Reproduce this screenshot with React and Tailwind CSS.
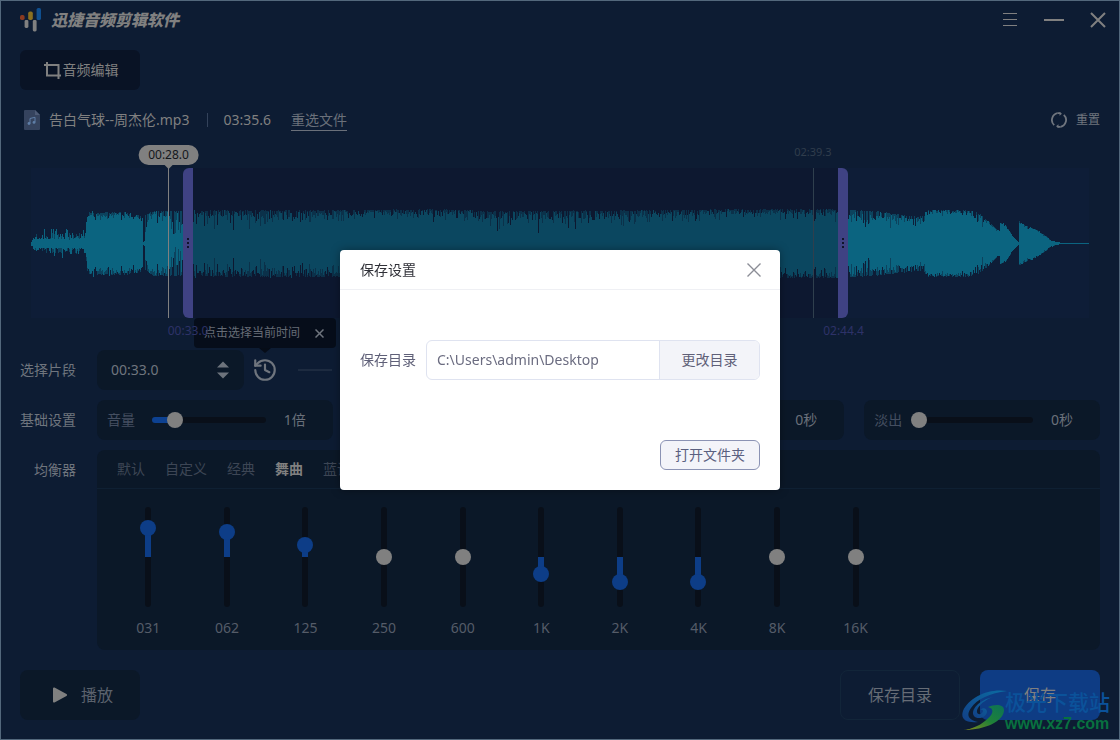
import { useState } from 'react';
import { History } from 'lucide-react';

const PRESETS = ['默认', '自定义', '经典', '舞曲', '蓝调'];

const BANDS = [
    { label: '031', gain: 8.3 },
    { label: '062', gain: 7.1 },
    { label: '125', gain: 3.4 },
    { label: '250', gain: 0 },
    { label: '600', gain: 0 },
    { label: '1K', gain: -4.9 },
    { label: '2K', gain: -7.1 },
    { label: '4K', gain: -7.1 },
    { label: '8K', gain: 0 },
    { label: '16K', gain: 0 },
];

// --- WAVE FORM ---
const WAVE_WIDTH = 1058;
const WAVE_MIDDLE = 75;

// [x, loudness, how deep the dips go, how high the peaks go]
const ENVELOPE = [
    [0, 1, 0, 1],
    [3, 4, 1, 10],
    [54, 5, 1, 12],
    [56, 24, 5, 8],
    [58, 29, 5, 4],
    [90, 30, 6, 3],
    [110, 26, 6, 6],
    [111, 26, 6, 6],
    [112, 1, 0, 0],
    [113, 2, 0, 0],
    [114, 26, 12, 7],
    [124, 31, 8, 3],
    [143, 31, 24, 3],
    [149, 31, 22, 3],
    [155, 31, 10, 3],
    [200, 32, 14, 2],
    [300, 32, 10, 2],
    [410, 33, 8, 2],
    [450, 31, 14, 3],
    [520, 31, 16, 3],
    [620, 32, 11, 2],
    [720, 33, 7, 2],
    [815, 33, 10, 2],
    [855, 30, 13, 2],
    [865, 28, 14, 3],
    [892, 25, 9, 4],
    [895, 32, 4, 3],
    [936, 32, 5, 2],
    [949, 28, 14, 3],
    [955, 23, 6, 2],
    [966, 13, 2, 1],
    [968, 12, 1, 1],
    [969, 20, 1, 1],
    [974, 18, 1, 1],
    [982, 6, 1, 1],
    [986, 2, 0, 1],
    [987, 1, 0, 0],
    [988, 20, 1, 6],
    [994, 17, 2, 2],
    [1005, 13, 1, 2],
    [1014, 7, 1, 1],
    [1020, 2, 0, 1],
    [1030, 0, 0, 0],
    [1058, 0, 0, 0],
];

function envelopeAt(x) {
    let i = 0;
    while (i < ENVELOPE.length - 2 && ENVELOPE[i + 1][0] <= x) i++;
    const a = ENVELOPE[i];
    const b = ENVELOPE[i + 1];
    const t = (x - a[0]) / (b[0] - a[0]);
    return [1, 2, 3].map((k) => a[k] + (b[k] - a[k]) * t);
}

function buildWave() {
    let seed = 28;
    const random = () => {
        seed = (seed * 16807) % 2147483647;
        return seed / 2147483647;
    };
    let body = '';
    let peaks = '';
    for (let x = 0; x < WAVE_WIDTH; x++) {
        const [level, dip, peak] = envelopeAt(x);
        const shape = random() ** 4;
        const side = () => Math.max(0, Math.round(level - shape * dip - random() * dip * 0.5 + random() ** 4 * peak));
        const up = side();
        const down = side();
        body += `M${x} ${WAVE_MIDDLE - up}V${WAVE_MIDDLE + 1 + down}`;
        if (random() < 0.6) {
            const reach = (h) => Math.round(Math.max(h, level + random() * peak * 0.5));
            peaks += `M${x} ${WAVE_MIDDLE - reach(up)}V${WAVE_MIDDLE + 1 + reach(down)}`;
        }
    }
    return { body, peaks };
}

const WAVE = buildWave();

function Waveform() {
    return (
        <div className="relative mx-[11px] h-[150px] bg-[#0e1d37]">
            <svg viewBox="0 0 1058 150" preserveAspectRatio="none" className="block h-full w-full" shapeRendering="crispEdges">
                <g transform="translate(0.5 0)" fill="none" strokeWidth="1">
                    <path d={WAVE.peaks} stroke="#0c435e" />
                    <path d={WAVE.body} stroke="#0b6480" />
                </g>
            </svg>

            {/* SELECTED RANGE */}
            <div className="absolute inset-y-0 left-[15.3%] right-[23.7%] bg-[#0b1226]/35"></div>
            <div className="absolute inset-y-0 left-[14.4%] flex w-2.5 flex-col items-center justify-center gap-0.5 rounded-l-md bg-[#3f4283]">
                <HandleDots />
            </div>
            <div className="absolute inset-y-0 left-[76.3%] flex w-2.5 flex-col items-center justify-center gap-0.5 rounded-r-md bg-[#3f4283]">
                <HandleDots />
            </div>
            <span className="absolute left-[14.85%] top-[155px] z-10 -translate-x-1/2 text-xs leading-4 text-[#2d3268]">00:33.0</span>
            <span className="absolute left-[76.8%] top-[155px] -translate-x-1/2 text-xs leading-4 text-[#2d3268]">02:44.4</span>

            {/* PLAYHEADS */}
            <div className="absolute inset-y-0 left-[12.95%] w-px bg-[#808080]"></div>
            <div className="absolute -top-[23px] left-[13%] flex -translate-x-1/2 flex-col items-center">
                <span className="rounded-full bg-[#808080] px-2.5 text-xs leading-5 text-[#14171c]">00:28.0</span>
                <span className="border-x-4 border-t-4 border-x-transparent border-t-[#808080]"></span>
            </div>
            <div className="absolute inset-y-0 left-[73.9%] w-px bg-[#2f3f4d]"></div>
            <span className="absolute -top-6 left-[73.9%] -translate-x-1/2 text-[11px] leading-4 text-[#303d4c]">02:39.3</span>
        </div>
    );
}

function HandleDots() {
    return (
        <>
            <i className="size-0.5 bg-[#10142a]"></i>
            <i className="size-0.5 bg-[#10142a]"></i>
            <i className="size-0.5 bg-[#10142a]"></i>
        </>
    );
}

function LevelPanel({ label, unit, start }) {
    const [value, setValue] = useState(start);

    return (
        <label className="flex h-10 items-center rounded-lg bg-[#0b1828] pl-2.5 pr-[25px]">
            <span className="w-[45px] shrink-0 text-[#444e60]">{label}</span>
            {/* the thumb hangs half over both ends of the track */}
            <span
                className="flex h-1.5 min-w-0 flex-1 items-center rounded-full bg-[#090f19]"
                style={{ backgroundImage: `linear-gradient(to right, #0d4191 ${value}%, transparent ${value}%)` }}
            >
                <input
                    type="range"
                    min="0"
                    max="100"
                    value={value}
                    onChange={(e) => setValue(Number(e.target.value))}
                    className="-mx-2 w-[calc(100%+16px)] shrink-0 appearance-none bg-transparent [&::-webkit-slider-thumb]:size-4 [&::-webkit-slider-thumb]:appearance-none [&::-webkit-slider-thumb]:rounded-full [&::-webkit-slider-thumb]:bg-[#808080]"
                />
            </span>
            <span className="ml-[18px] w-6 shrink-0 text-[#6a707a]">{unit}</span>
        </label>
    );
}

function Band({ label, gain }) {
    const [value, setValue] = useState(gain);

    // the thumb is 16px wide on a 100px track, so it travels 42px each way
    const thumb = 50 - (value / 12) * 42;
    const from = Math.min(50, thumb);
    const to = Math.max(50, thumb);

    return (
        <label className="flex flex-col items-center">
            <input
                type="range"
                min="-12"
                max="12"
                step="0.1"
                value={value}
                onChange={(e) => setValue(Number(e.target.value))}
                className={`h-[100px] w-1.5 appearance-none rounded-full bg-[#090f19] [direction:rtl] [writing-mode:vertical-lr] [&::-webkit-slider-thumb]:size-4 [&::-webkit-slider-thumb]:appearance-none [&::-webkit-slider-thumb]:rounded-full ${value === 0 ? '[&::-webkit-slider-thumb]:bg-[#808080]' : '[&::-webkit-slider-thumb]:bg-[#0d3d87]'}`}
                style={{ backgroundImage: `linear-gradient(to bottom, transparent ${from}%, #0d3d87 ${from}%, #0d3d87 ${to}%, transparent ${to}%)` }}
            />
            <span className="mt-[11px] leading-5 text-[#555c68]">{label}</span>
        </label>
    );
}

function TimeField({ label, start }) {
    return (
        <div className="flex h-10 w-[147px] items-center justify-between rounded-lg bg-[#0b1828] pl-3.5 pr-[15px]">
            <input type="text" aria-label={label} defaultValue={start} className="w-20 bg-transparent text-[#6f757e] outline-none" />
            <div className="flex flex-col gap-1">
                <button aria-label="+" className="block">
                    <svg width="12" height="7" viewBox="0 0 12 7" fill="#6d737c"><path d="M6 0.5L12 6.5H0z" /></svg>
                </button>
                <button aria-label="-" className="block">
                    <svg width="12" height="7" viewBox="0 0 12 7" fill="#6d737c"><path d="M6 6.5L0 0.5H12z" /></svg>
                </button>
            </div>
        </div>
    );
}

function Logo() {
    return (
        <svg width="22" height="24" viewBox="0 0 22 24">
            <rect x="0" y="7" width="4.600" height="5" rx="1.800" fill="#8a3a20" />
            <rect x="4.600" y="12" width="3.800" height="8" rx="1.400" fill="#808080" />
            <rect x="8.200" y="3.500" width="4.600" height="8.500" rx="1.800" fill="#8a7020" />
            <rect x="12.800" y="12" width="3.800" height="11.500" rx="1.400" fill="#808080" />
            <rect x="16.600" y="0" width="4.400" height="12" rx="1.600" fill="#0f4f8f" />
        </svg>
    );
}

function Watermark() {
    return (
        <div className="pointer-events-none absolute bottom-2 right-2.5 flex items-center">
            <svg width="46" height="42" viewBox="0 0 46 42" fill="none">
                <defs>
                    <linearGradient id="swooshBlue" x1="0" y1="1" x2="1" y2="0">
                        <stop offset="0" stopColor="#123f86" />
                        <stop offset="1" stopColor="#0b6da3" />
                    </linearGradient>
                    <linearGradient id="swooshGreen" x1="0" y1="1" x2="1" y2="0">
                        <stop offset="0" stopColor="#87891a" />
                        <stop offset="0.5" stopColor="#1f8138" />
                        <stop offset="1" stopColor="#0b7258" />
                    </linearGradient>
                </defs>
                <path d="M46 2C28 -1 8 8 2 22C-1 31 6 34 17 33C7 31 5 26 10 19C16 10 29 4 46 2z" fill="url(#swooshBlue)" />
                <path d="M32 8C18 11 9 21 13 27C16 31 25 29 26 23C26 19 22 18 19 21C22 20 23 22 21 24C18 27 14 24 17 19C20 14 26 10 32 8z" fill="url(#swooshBlue)" />
                <path d="M27 18C34 15 43 15 43 21C43 32 24 41 3 41C10 40 18 37 24 32C31 27 35 20 27 18z" fill="url(#swooshGreen)" />
                <path d="M16 36C12 38 8 40 3 41C9 37 13 36 19 35z" fill="#0d1c33" />
            </svg>
            <div className="-ml-0.5 flex flex-col">
                <span className="text-[21px] font-medium leading-7 text-[#0b529a]">极光下载站</span>
                <span className="font-['Liberation_Sans'] text-base font-bold leading-4 text-[#087140]">www.xz7.com</span>
            </div>
        </div>
    );
}

function SaveDialog() {
    const [open, setOpen] = useState(true);
    if (!open) return null;

    return (
        <div className="fixed inset-0 z-20 flex items-center justify-center">
            <div role="dialog" aria-labelledby="save-title" className="flex h-60 w-[440px] flex-col rounded bg-white shadow-[0_0_10px_rgba(0,0,0,0.35)]">
                <div className="flex h-10 items-center justify-between border-b border-[#eff0f4] pl-5 pr-[19px]">
                    <h2 id="save-title" className="text-[#303138]">保存设置</h2>
                    <button aria-label="关闭" onClick={() => setOpen(false)}>
                        <svg width="14" height="14" viewBox="0 0 14 14" stroke="#8b8d96" strokeWidth="1.4"><path d="M0.500 0.500l13 13M13.500 0.500l-13 13" /></svg>
                    </button>
                </div>
                <div className="flex flex-1 flex-col justify-between p-5 pt-[50px]">
                    <div className="flex items-center gap-2.5 text-[#5f6078]">
                        <label htmlFor="save-dir">保存目录</label>
                        <div className="flex h-10 flex-1 overflow-hidden rounded-md border border-[#dfe3f0]">
                            <input id="save-dir" type="text" readOnly defaultValue="C:\Users\admin\Desktop" className="min-w-0 flex-1 px-2.5 text-[#6b6c80] outline-none" />
                            <button className="w-[100px] border-l border-[#dfe3f0] bg-[#f3f4f9]">更改目录</button>
                        </div>
                    </div>
                    <button className="h-[30px] w-[100px] self-end rounded-md border border-[#8b93b4] bg-[#f3f4f9] text-[#5a6080]">打开文件夹</button>
                </div>
            </div>
        </div>
    );
}

export default function App() {
    const [preset, setPreset] = useState('舞曲');

    return (
        <div className="relative flex min-h-screen flex-col overflow-hidden bg-[#0d1c33] px-5 pb-5 font-['Noto_Sans','Noto_Sans_CJK_SC',sans-serif] text-sm text-[#6f757e] outline-1 -outline-offset-1 outline-[#53687c]">

            {/* TITLE BAR */}
            <header className="flex h-10 items-center justify-between">
                <div className="flex items-center gap-[9px]">
                    <Logo />
                    <h1 className="text-base font-black italic text-[#808080]">迅捷音频剪辑软件</h1>
                </div>
                <div className="-mr-1.5 flex items-center gap-[26px]">
                    <button aria-label="菜单" className="mr-px">
                        <svg width="14" height="14" viewBox="0 0 14 14" stroke="#808080" shapeRendering="crispEdges"><path d="M0 0.500h14M0 6.500h14M0 12.500h14" /></svg>
                    </button>
                    <button aria-label="最小化">
                        <svg width="20" height="16" viewBox="0 0 20 16" stroke="#808080" strokeWidth="2"><path d="M0 8h20" /></svg>
                    </button>
                    <button aria-label="退出">
                        <svg width="16" height="16" viewBox="0 0 16 16" stroke="#808080" strokeWidth="2"><path d="M1 1l14 14M15 1l-14 14" /></svg>
                    </button>
                </div>
            </header>

            <button className="mt-2.5 flex h-10 w-[120px] items-center justify-center gap-0.5 rounded-md bg-[#091325] pl-0.5 text-[#808080]">
                <svg width="17" height="17" viewBox="0 0 17 17" fill="none" stroke="#808080" strokeWidth="2"><path d="M0 3h14.500v14M3 0v13.500h14" /></svg>
                音频编辑
            </button>

            {/* FILE INFO */}
            <div className="mt-3.5 flex h-8 items-center pl-1">
                <svg width="16" height="20" viewBox="0 0 16 20">
                    <path d="M1 0h10l5 5v14a1 1 0 0 1-1 1H1a1 1 0 0 1-1-1V1a1 1 0 0 1 1-1z" fill="#35435e" />
                    <path d="M11 0l5 5h-5z" fill="#4d5a75" />
                    <path d="M6 13.500V8.500l5-1.200v5" fill="none" stroke="#5f7fa8" />
                    <circle cx="5" cy="13.500" r="1.400" fill="#5f7fa8" />
                    <circle cx="10" cy="12.400" r="1.400" fill="#5f7fa8" />
                </svg>
                <span className="ml-[9px] text-[#808080]">告白气球--周杰伦.mp3</span>
                <span className="ml-[18px] h-3.5 w-px bg-[#33425a]"></span>
                <span className="ml-[15px] text-[#808080]">03:35.6</span>
                <a href="#" className="ml-5 border-b border-[#6a707a] leading-[21px] text-[#6a707a]">重选文件</a>
                <button className="ml-auto flex items-center gap-[9px] text-xs">
                    <svg width="16" height="16" viewBox="0 0 16 16" fill="none" stroke="#6f757e" strokeWidth="1.800">
                        <path d="M3.200 13.200A7 7 0 0 1 6.500 1.200M9.500 14.800A7 7 0 0 0 12.800 2.800" />
                        <path d="M6.500 1.200a7 7 0 0 1 3 0M9.500 14.800a7 7 0 0 1-3 0" />
                        <path d="M8.500 0l2.500 1.800-2.500 2zM7.500 16L5 14.200l2.500-2z" fill="#6f757e" stroke="none" />
                    </svg>
                    重置
                </button>
            </div>

            <div className="mt-8">
                <Waveform />
            </div>

            {/* SETTINGS */}
            <div className="mt-8 grid grid-cols-[56px_1fr] items-center gap-x-[21px] gap-y-2.5">
                <span>选择片段</span>
                <div className="flex items-center">
                    <TimeField label="开始时间" start="00:33.0" />
                    <div className="relative ml-2 flex">
                        <button aria-label="选择当前时间"><History size={26} strokeWidth={2} color="#6f757e" /></button>
                        <div className="absolute bottom-[35px] left-1/2 flex h-[30px] w-[142px] -translate-x-1/2 items-center justify-between rounded bg-[#060c17]/90 pl-2.5 pr-3 text-xs text-[#666c76]">
                            <span className="whitespace-nowrap">点击选择当前时间</span>
                            <button aria-label="关闭提示">
                                <svg width="9" height="9" viewBox="0 0 9 9" stroke="#6f757e" strokeWidth="1.500"><path d="M0.500 0.500l8 8M8.500 0.500l-8 8" /></svg>
                            </button>
                            <span className="absolute left-1/2 top-full -translate-x-1/2 border-x-[6px] border-t-[5px] border-x-transparent border-t-[#060c17]"></span>
                        </div>
                    </div>
                    <span className="mx-5 h-0.5 w-[34px] bg-[#1d2b40]"></span>
                    <TimeField label="结束时间" start="02:44.4" />
                </div>

                <span>基础设置</span>
                <div className="grid grid-cols-4 gap-5">
                    <LevelPanel label="音量" unit="1倍" start={20} />
                    <LevelPanel label="速度" unit="1倍" start={20} />
                    <LevelPanel label="淡入" unit="0秒" start={0} />
                    <LevelPanel label="淡出" unit="0秒" start={0} />
                </div>

                <span className="mt-2.5 self-start text-right">均衡器</span>
                <div className="h-[200px] rounded-lg bg-[#0b1828]">
                    <div className="flex h-[39px] items-center gap-5 border-b border-[#0f2033] px-5">
                        {PRESETS.map((name) => (
                            <button
                                key={name}
                                onClick={() => setPreset(name)}
                                className={name === preset ? 'font-bold text-[#808080]' : 'text-[#3d4655]'}
                            >
                                {name}
                            </button>
                        ))}
                    </div>
                    <div className="grid w-full max-w-[798px] grid-cols-10 pl-3 pt-[18px]">
                        {BANDS.map((band) => (
                            <Band key={band.label} {...band} />
                        ))}
                    </div>
                </div>
            </div>

            {/* FOOTER */}
            <footer className="mt-5 flex h-[50px] items-stretch text-base">
                <button className="flex w-[120px] items-center justify-center gap-3.5 rounded-lg bg-[#0b1828] pl-1.5 text-[#5b626d]">
                    <svg width="14" height="16" viewBox="0 0 14 16" fill="#808080" stroke="#808080" strokeWidth="2" strokeLinejoin="round"><path d="M1 1.500l12 6.500-12 6.500z" /></svg>
                    播放
                </button>
                <button className="ml-auto w-[120px] rounded-lg border border-[#122539] text-[#666c76]">保存目录</button>
                <button className="ml-5 w-[120px] rounded-lg bg-[#0e3c84] text-[#808080]">保存</button>
            </footer>

            <Watermark />
            <SaveDialog />
        </div>
    );
}
